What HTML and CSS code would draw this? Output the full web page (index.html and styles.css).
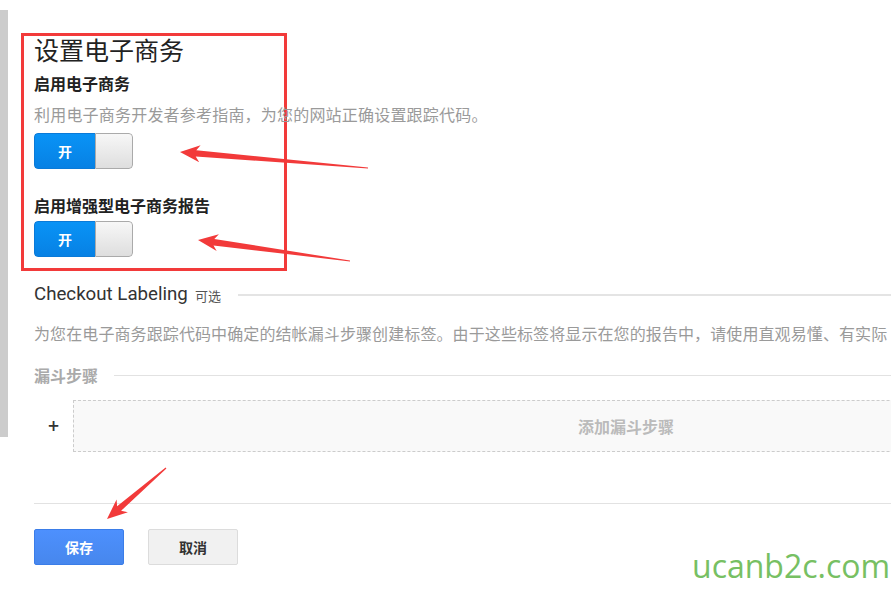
FILE: index.html
```html
<!DOCTYPE html>
<html lang="zh-CN">
<head>
<meta charset="utf-8">
<title>设置电子商务</title>
<link rel="stylesheet" href="styles.css">
</head>
<body>
<div class="page">
  <div class="sidebar-edge"></div>
  <main class="main">
    <section class="highlight">
      <h1 class="title">设置电子商务</h1>
      <h2 class="label">启用电子商务</h2>
      <p class="hint">利用电子商务开发者参考指南，为您的网站正确设置跟踪代码。</p>
      <div class="toggle toggle-first"><span class="toggle-on">开</span><span class="toggle-knob"></span></div>
      <h2 class="label label-second">启用增强型电子商务报告</h2>
      <div class="toggle toggle-second"><span class="toggle-on">开</span><span class="toggle-knob"></span></div>
    </section>

    <div class="content">
      <div class="section-head">
        <span class="section-title">Checkout Labeling</span>
        <span class="section-optional">可选</span>
        <span class="section-rule"></span>
      </div>
      <p class="section-desc">为您在电子商务跟踪代码中确定的结帐漏斗步骤创建标签。由于这些标签将显示在您的报告中，请使用直观易懂、有实际</p>
      <div class="sub-head">
        <span class="sub-title">漏斗步骤</span>
        <span class="sub-rule"></span>
      </div>
      <div class="step-row">
        <span class="step-plus">+</span>
        <div class="step-add">添加漏斗步骤</div>
      </div>
      <div class="divider"></div>
      <div class="actions">
        <button class="btn btn-save">保存</button>
        <button class="btn btn-cancel">取消</button>
      </div>
    </div>
  </main>
</div>

<svg class="annotations" width="891" height="596" viewBox="0 0 891 596" aria-hidden="true">
  <polygon points="180,152 200.6,145.2 196.3,150.2 368,167.6 368,168.4 195.7,156.6 199.2,162.2" fill="#f23a3a"/>
  <polygon points="198,240 218.9,234.3 214.3,238.9 350,260.6 350,261.4 213.5,245.5 216.7,251.1" fill="#f23a3a"/>
  <polygon points="107,519 116.6,499.4 117.1,506.2 165.6,467.6 166.4,468.4 121.1,510.8 127.9,512.2" fill="#f23a3a"/>
</svg>

<div class="watermark">ucanb2c.com</div>
</body>
</html>
```

FILE: styles.css
```css
html, body {
  margin: 0;
  padding: 0;
  background: #ffffff;
}

body {
  width: 891px;
  height: 596px;
  overflow: hidden;
  position: relative;
  font-family: "Noto Sans CJK SC", "Noto Sans", sans-serif;
  color: #222;
}

.page {
  display: flex;
  align-items: flex-start;
}

.sidebar-edge {
  flex: 0 0 8px;
  height: 427px;
  margin-top: 10px;
  background: #cccccc;
}

.main {
  flex: 1;
  margin-left: 13px;
  padding-top: 33px;
  min-width: 0;
}

.highlight {
  width: 240px;
  border: 3px solid #f23a3a;
  padding: 0 10px 11px 10px;
  white-space: nowrap;
}

.title {
  margin: -2px 0 0 0;
  font-size: 25px;
  line-height: 30px;
  font-weight: 400;
  color: #222;
}

.label {
  margin: 8px 0 0 0;
  font-size: 16px;
  line-height: 22px;
  font-weight: 700;
  color: #222;
}

.label-second {
  margin-top: 25px;
}

.hint {
  margin: 9px 0 0 0;
  font-size: 16px;
  line-height: 22px;
  color: #9a9a9a;
  letter-spacing: 0.2px;
}

.toggle {
  display: flex;
  width: 99px;
  height: 36px;
  box-sizing: border-box;
  border-radius: 4px;
  overflow: hidden;
}

.toggle-first {
  margin-top: 8px;
}

.toggle-second {
  margin-top: 5px;
}

.toggle-on {
  flex: 0 0 61px;
  display: flex;
  align-items: center;
  justify-content: center;
  background: linear-gradient(#0993f6, #0781e4);
  border: 1px solid #0a7ad8;
  border-right: none;
  border-radius: 4px 0 0 4px;
  box-sizing: border-box;
  color: #fff;
  font-size: 14px;
  font-weight: 700;
}

.toggle-knob {
  flex: 1;
  background: linear-gradient(#f7f7f7, #dedede);
  border: 1px solid #aaaaaa;
  border-radius: 0 4px 4px 0;
  box-sizing: border-box;
}

.content {
  padding-left: 13px;
}

.section-head {
  display: flex;
  align-items: center;
  margin-top: 11px;
  height: 24px;
  white-space: nowrap;
}

.section-title {
  font-family: Roboto, "Noto Sans CJK SC", sans-serif;
  font-size: 18.7px;
  line-height: 24px;
  color: #333;
}

.section-optional {
  margin-left: 7px;
  font-size: 13px;
  line-height: 24px;
  color: #555;
  padding-top: 3px;
}

.section-rule {
  flex: 1;
  height: 2px;
  margin-left: 17px;
  margin-top: 2px;
  background: #e4e4e4;
}

.section-desc {
  margin: 16px 0 0 0;
  font-size: 16px;
  line-height: 22px;
  color: #9a9a9a;
  white-space: nowrap;
  letter-spacing: 0.1px;
}

.sub-head {
  display: flex;
  align-items: center;
  margin-top: 20px;
  height: 22px;
}

.sub-title {
  font-size: 16px;
  line-height: 22px;
  font-weight: 700;
  color: #aaaaaa;
}

.sub-rule {
  flex: 1;
  height: 1px;
  margin-left: 16px;
  background: #e2e2e2;
}

.step-row {
  display: flex;
  align-items: center;
  margin-top: 14px;
}

.step-plus {
  flex: 0 0 39px;
  text-align: center;
  font-family: "DejaVu Sans", sans-serif;
  font-size: 15px;
  font-weight: 700;
  color: #333;
}

.step-add {
  flex: 0 0 1106px;
  height: 52px;
  box-sizing: border-box;
  border: 1px dashed #cccccc;
  background: #f9f9f9;
  display: flex;
  align-items: center;
  justify-content: center;
  font-size: 16px;
  font-weight: 700;
  color: #bbbbbb;
}

.divider {
  margin-top: 51px;
  height: 1px;
  background: #e2e2e2;
}

.actions {
  display: flex;
  gap: 24px;
  margin-top: 25px;
}

.btn {
  width: 90px;
  height: 36px;
  border-radius: 2px;
  font-family: "Noto Sans CJK SC", sans-serif;
  font-size: 14px;
  font-weight: 700;
  padding: 0;
  cursor: pointer;
}

.btn-save {
  background: linear-gradient(#4d90fe, #4787ed);
  border: 1px solid #3b7de8;
  color: #fff;
}

.btn-cancel {
  background: #f1f1f1;
  border: 1px solid #dcdcdc;
  color: #333;
}

.annotations {
  position: absolute;
  left: 0;
  top: 0;
  pointer-events: none;
}

.watermark {
  position: absolute;
  left: 692px;
  top: 550px;
  font-family: "Open Sans", sans-serif;
  font-size: 32px;
  line-height: 32px;
  color: #77c063;
  pointer-events: none;
}
```
